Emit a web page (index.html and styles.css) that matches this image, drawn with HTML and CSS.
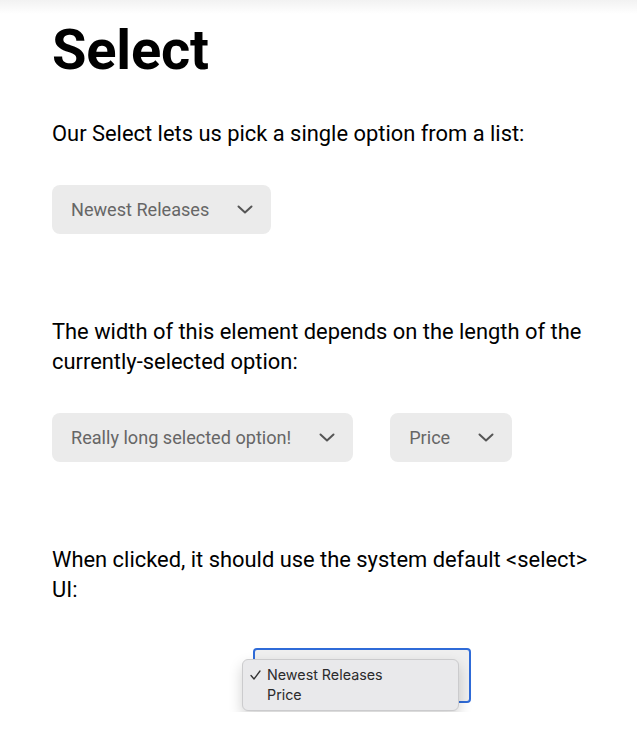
FILE: index.html
```html
<!DOCTYPE html>
<html lang="en">
<head>
<meta charset="utf-8">
<title>Select</title>
<link rel="stylesheet" href="styles.css">
</head>
<body>
<main class="page">
  <h1 class="title">Select</h1>
  <p class="text">Our Select lets us pick a single option from a list:</p>
  <div class="row">
    <div class="select"><span class="select-label">Newest Releases</span><svg class="chevron" width="16" height="9" viewBox="0 0 16 9"><path d="M1.5 1.5 L8 7.5 L14.5 1.5" fill="none" stroke="#555" stroke-width="2" stroke-linecap="round" stroke-linejoin="round"/></svg></div>
  </div>
  <p class="text text-spaced">The width of this element depends on the length of the currently-selected option:</p>
  <div class="row">
    <div class="select"><span class="select-label">Really long selected option!</span><svg class="chevron" width="16" height="9" viewBox="0 0 16 9"><path d="M1.5 1.5 L8 7.5 L14.5 1.5" fill="none" stroke="#555" stroke-width="2" stroke-linecap="round" stroke-linejoin="round"/></svg></div>
    <div class="select"><span class="select-label">Price</span><svg class="chevron" width="16" height="9" viewBox="0 0 16 9"><path d="M1.5 1.5 L8 7.5 L14.5 1.5" fill="none" stroke="#555" stroke-width="2" stroke-linecap="round" stroke-linejoin="round"/></svg></div>
  </div>
  <p class="text text-spaced">When clicked, it should use the system default &lt;select&gt; UI:</p>
  <div class="native-demo">
    <div class="native-select"></div>
    <ul class="native-menu">
      <li class="native-option"><svg class="check" width="11" height="10" viewBox="0 0 11 10"><path d="M1 5.5 L4 9 L10 1" fill="none" stroke="#333" stroke-width="1.3" stroke-linecap="round" stroke-linejoin="round"/></svg>Newest Releases</li>
      <li class="native-option"><span class="check-space"></span>Price</li>
    </ul>
  </div>
</main>
</body>
</html>
```
FILE: styles.css
```css
html {
  background: #fff;
}
body {
  margin: 0;
  background: linear-gradient(#f2f2f2 0px, #ffffff 14px) no-repeat;
  font-family: Roboto, "Liberation Sans", sans-serif;
  color: #000;
}
.page {
  padding: 22px 40px 0 52px;
}
.title {
  margin: 0;
  font-size: 56px;
  line-height: 56px;
  font-weight: 700;
  letter-spacing: -0.2px;
}
.text {
  margin: 41px 0 0 0;
  font-size: 21.9px;
  line-height: 30px;
}
.text-spaced {
  margin-top: 83px;
}
.row {
  display: flex;
  gap: 37px;
  margin-top: 36px;
}
.select {
  display: inline-flex;
  align-items: center;
  gap: 28px;
  padding: 12px 18px 12px 19px;
  background: #ebebeb;
  border-radius: 8px;
  color: #666;
  font-size: 18.1px;
  line-height: 25px;
}
.chevron {
  display: block;
}
.native-demo {
  position: relative;
  margin: 43px 0 0 189px;
  width: 230px;
  height: 64px;
}
.native-select {
  margin-left: 12px;
  width: 214px;
  height: 51px;
  border: 2px solid #2f6bd8;
  border-radius: 4px;
  background: #efefef;
}
.native-menu {
  position: absolute;
  left: 1px;
  top: 11px;
  width: 217px;
  height: 52px;
  margin: 0;
  padding: 5px 0 0 0;
  box-sizing: border-box;
  list-style: none;
  background: #e9e9eb;
  border: 1px solid #cbcbcd;
  border-radius: 6px;
  box-shadow: 0 6px 14px rgba(0, 0, 0, 0.18);
  font-family: Inter, "Liberation Sans", sans-serif;
  font-size: 14.3px;
  line-height: 20px;
  color: #2b2b2b;
}
.native-option {
  display: flex;
  align-items: center;
}
.check {
  display: block;
  margin: 0 6px 0 7px;
}
.check-space {
  display: block;
  width: 24px;
}
```
